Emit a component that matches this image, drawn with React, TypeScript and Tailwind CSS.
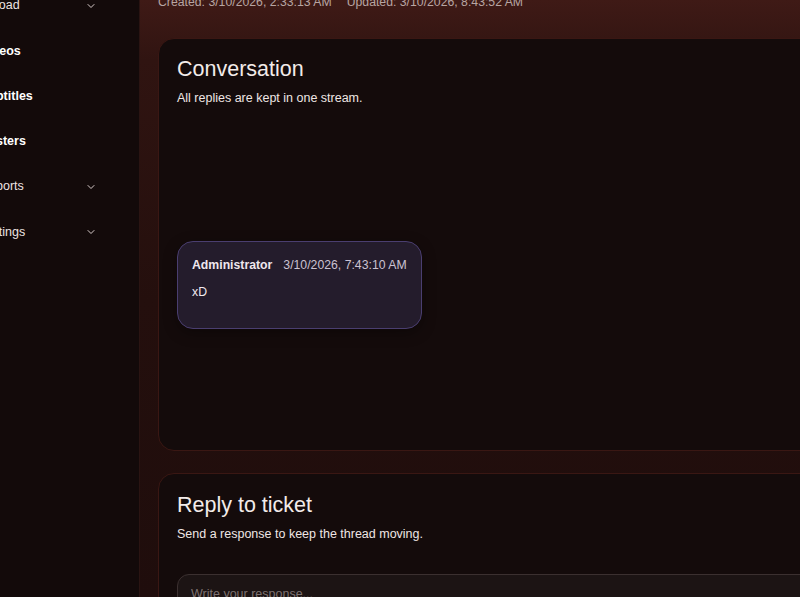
import { ChevronDown } from 'lucide-react';

const navItems = [
  { label: 'Upload', bold: false, chevron: true },
  { label: 'Videos', bold: true, chevron: false },
  { label: 'Subtitles', bold: true, chevron: false },
  { label: 'Posters', bold: true, chevron: false },
  { label: 'Reports', bold: false, chevron: true },
  { label: 'Settings', bold: false, chevron: true },
];

export default function App() {
  return (
    <div
      className="flex h-[597px] w-[800px] overflow-hidden bg-[#140a0a] text-[12.5px] text-[#f1e8e6]"
      style={{ fontFamily: '"Liberation Sans", Arial, sans-serif' }}
    >
      {/* Sidebar (scrolled, labels cut at the left edge) */}
      <aside className="w-[140px] shrink-0 border-r border-[#2a1412] bg-[#130a0a]">
        <nav className="-mt-[17px] flex flex-col">
          {navItems.map((item) => (
            <div key={item.label} className="-ml-[20px] flex h-[45.3px] items-center pr-[42px]">
              <span className={item.bold ? 'font-bold text-white' : 'text-[#eee4e2]'}>{item.label}</span>
              {item.chevron && <ChevronDown className="ml-auto h-[12px] w-[12px] text-[#d8cccb]" strokeWidth={2} />}
            </div>
          ))}
        </nav>
      </aside>

      {/* Main */}
      <main className="flex-1 bg-[linear-gradient(180deg,#3f1a16_0px,#301411_60px,#240f0d_300px,#1f0d0c_597px)] pl-[18px]">
        <div className="-mt-[7px] flex gap-[15px] pb-[25px] text-[12.25px] leading-[19.5px] text-[#b8a5a2]">
          <span>Created: 3/10/2026, 2:33:13 AM</span>
          <span>Updated: 3/10/2026, 8:43:52 AM</span>
        </div>

        <section className="h-[413px] w-[700px] rounded-[16px] border border-[#3a1713] bg-[#140b0b] px-[18px] pt-[17px]">
          <h2 className="text-[21.5px] leading-[26px] text-[#f3ebe9]">Conversation</h2>
          <p className="mt-[7px] leading-[19.5px] text-[#efe6e4]">All replies are kept in one stream.</p>

          <div className="mt-[133px] w-fit whitespace-nowrap rounded-[16px] border border-[#4a3e70] bg-[#241c2c] pb-[26px] pl-[14px] pr-[14px] pt-[14px] text-[12.25px] leading-[19.5px] shadow-[0_4px_14px_rgba(0,0,0,0.35)]">
            <div className="flex items-center gap-[11px]">
              <span className="font-bold text-[#efe7ee]">Administrator</span>
              <span className="text-[#cbc2d2]">3/10/2026, 7:43:10 AM</span>
            </div>
            <p className="mt-[7px] text-[#f1eaf0]">xD</p>
          </div>
        </section>

        <section className="mt-[22px] h-[200px] w-[700px] rounded-[16px] border border-[#3a1713] bg-[#140b0b] px-[18px] pt-[18px]">
          <h2 className="text-[21.5px] leading-[26px] text-[#f3ebe9]">Reply to ticket</h2>
          <p className="mt-[7px] leading-[19.5px] text-[#efe6e4]">Send a response to keep the thread moving.</p>
          <div className="mt-[30px] h-[80px] rounded-[12px] border border-[#3b3030] bg-[#1c1414] px-[13px] pt-[10px] text-[#7d7170]">
            Write your response...
          </div>
        </section>
      </main>
    </div>
  );
}
